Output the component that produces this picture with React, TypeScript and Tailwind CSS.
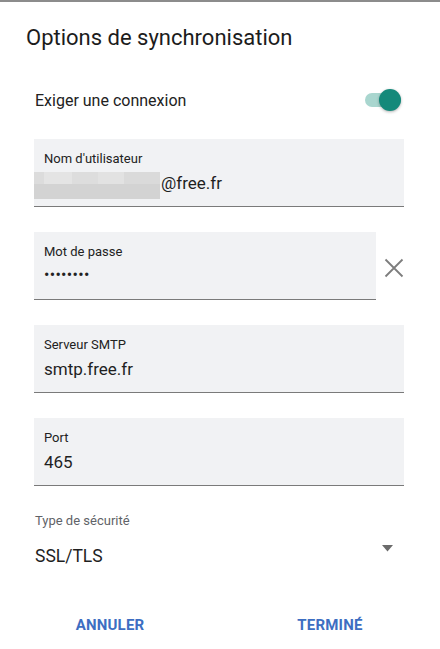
import React from "react";

function Field({ label, children, className = "" }: { label: string; children: React.ReactNode; className?: string }) {
  return (
    <div className={`bg-[#f1f2f4] border-b border-[#7a7a7a] pl-[10px] pt-[12px] pb-[12px] ${className}`}>
      <div className="text-[13px] leading-[16px] text-[#222]">{label}</div>
      <div className="mt-[5px] h-[22px] text-[17px] leading-[22px] text-[#1f1f1f] flex items-center">{children}</div>
    </div>
  );
}

export default function App() {
  return (
    <div
      className="w-[440px] h-[649px] bg-white border-t-2 border-[#8c8c8c] flex flex-col"
      style={{ fontFamily: "Roboto, 'Noto Sans', sans-serif" }}
    >
      <div className="pl-[26px] pt-[22px] text-[22px] leading-[28px] text-[#1c1c1c]">Options de synchronisation</div>

      <div className="mt-[37px] pl-[35px] pr-[39px] flex items-center justify-between h-[24px]">
        <span className="text-[16px] leading-[24px] text-[#222]">Exiger une connexion</span>
        <div className="relative w-[36px] h-[14px] -mt-[3px]">
          <div className="absolute inset-0 rounded-full bg-[#a9d6cf]" />
          <div className="absolute right-0 top-1/2 -translate-y-1/2 w-[22px] h-[22px] rounded-full bg-[#14897a] shadow-[0_1px_3px_rgba(0,0,0,0.3)]" />
        </div>
      </div>

      <div className="mt-[26px] px-[34px] pr-[36px] flex flex-col gap-[25px]">
        <Field label="Nom d'utilisateur">
          <span className="-ml-[10px] mr-[1px] w-[126px] h-[27px] mt-[5px] flex flex-col">
            <span className="h-[12px] flex">
              <span className="w-[10px] bg-[#dcdcdc]" />
              <span className="w-[28px] bg-[#e4e4e4]" />
              <span className="w-[26px] bg-[#dddddd]" />
              <span className="w-[26px] bg-[#e2e2e2]" />
              <span className="flex-1 bg-[#dadada]" />
            </span>
            <span className="flex-1 bg-[#d3d3d3]" />
          </span>
          <span>@free.fr</span>
        </Field>

        <div className="flex items-center">
          <Field label="Mot de passe" className="w-[342px]">
            <span className="text-[16px] tracking-[0.3px] text-[#222] -mt-[2px]">••••••••</span>
          </Field>
          <div className="ml-[8px] mt-[3px] w-[20px] h-[20px] flex items-center justify-center">
            <svg width="20" height="20" viewBox="0 0 20 20">
              <path d="M1.5 1.5 L18.5 18.5 M18.5 1.5 L1.5 18.5" stroke="#7d7d7d" strokeWidth="1.8" fill="none" />
            </svg>
          </div>
        </div>

        <Field label="Serveur SMTP">smtp.free.fr</Field>
        <Field label="Port">465</Field>
      </div>

      <div className="mt-[27px] pl-[35px] text-[13px] leading-[16px] text-[#5f6368]">Type de sécurité</div>
      <div className="mt-[15px] pl-[35px] pr-[47px] flex items-start justify-between">
        <span className="text-[17.5px] leading-[24px] text-[#1f1f1f]">SSL/TLS</span>
        <svg width="11" height="7" viewBox="0 0 11 7" className="mt-[1px]">
          <path d="M0 0 L11 0 L5.5 6.5 Z" fill="#6b6b6b" />
        </svg>
      </div>

      <div className="mt-[47px] grid grid-cols-2">
        <div className="text-center text-[15px] leading-[20px] font-bold text-[#3d6ec2] tracking-[0.2px]">ANNULER</div>
        <div className="text-center text-[15px] leading-[20px] font-bold text-[#3d6ec2] tracking-[0.2px]">TERMINÉ</div>
      </div>
    </div>
  );
}
